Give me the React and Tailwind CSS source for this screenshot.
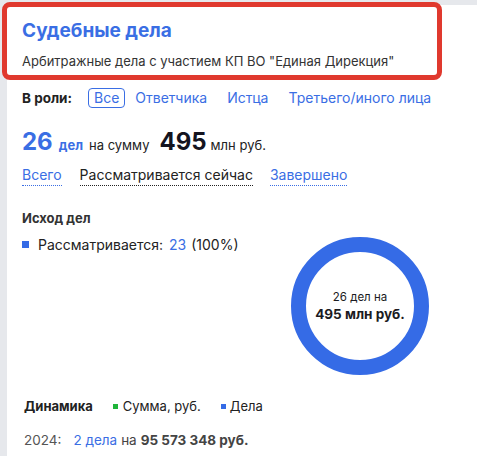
import React from 'react';

const font = { fontFamily: 'Inter, "Noto Sans", sans-serif' };

function Donut() {
  return (
    <div className="relative w-[138px] h-[138px] shrink-0">
      <svg width="138" height="138" viewBox="0 0 138 138">
        <circle cx="69" cy="69" r="61.5" fill="none" stroke="#356be6" strokeWidth="15" />
      </svg>
      <div className="absolute inset-0 flex flex-col items-center justify-center text-[#1b1b22]">
        <div className="text-[11.5px] leading-[16px]">26 дел на</div>
        <div className="text-[13.5px] leading-[18px] font-bold">495 млн руб.</div>
      </div>
    </div>
  );
}

export default function App() {
  return (
    <div className="relative w-[477px] h-[456px] overflow-hidden bg-[#e6e8ec] pl-[7px] pt-[5px]" style={font}>
      <div className="bg-white w-[480px] h-full pl-[15px] text-[#222]">
        {/* шапка */}
        <div className="pt-[13px]">
          <h1 className="text-[19px] leading-[26px] font-bold text-[#3a6ee4]">Судебные дела</h1>
          <p className="mt-[7px] text-[13px] leading-[20px] text-[#333]">
            Арбитражные дела с участием КП ВО "Единая Дирекция"
          </p>
        </div>

        {/* роли */}
        <div className="mt-[17px] flex items-center text-[14px] leading-[20px]">
          <span className="font-bold text-[13.5px] text-[#222]">В роли:</span>
          <span className="ml-[16px] px-[5px] h-[20px] flex items-center border border-[#3a6ee4] rounded-[4px] text-[#3a6ee4]">Все</span>
          <span className="ml-[10px] text-[#3a6ee4]">Ответчика</span>
          <span className="ml-[20px] text-[#3a6ee4]">Истца</span>
          <span className="ml-[20px] text-[#3a6ee4]">Третьего/иного лица</span>
        </div>

        {/* итоги */}
        <div className="mt-[16px] flex items-baseline text-[13px]">
          <span className="text-[24px] leading-[32px] font-bold text-[#3a6ee4]">26</span>
          <span className="ml-[6px] font-bold text-[#3a6ee4]">дел</span>
          <span className="ml-[6px] text-[#222]">на сумму</span>
          <span className="ml-[10px] text-[24px] font-bold text-[#14141f]">495</span>
          <span className="ml-[4px] text-[#222]">млн руб.</span>
        </div>

        <div className="mt-[5px] flex text-[14px] leading-[20px]">
          <span className="text-[#3a6ee4] border-b border-dotted border-[#3a6ee4]">Всего</span>
          <span className="ml-[18px] text-[#222] border-b border-dotted border-[#222]">Рассматривается сейчас</span>
          <span className="ml-[17px] text-[#3a6ee4] border-b border-dotted border-[#3a6ee4]">Завершено</span>
        </div>

        {/* исход */}
        <div className="mt-[22px] text-[13px] leading-[20px] font-bold text-[#333]">Исход дел</div>
        <div className="mt-[6px] flex">
          <div className="w-[269px] flex items-center h-[20px] text-[14px]">
            <span className="w-[7px] h-[7px] bg-[#356be6]" />
            <span className="ml-[9px] text-[#222]">Рассматривается:</span>
            <span className="ml-[6px] text-[#3a6ee4]">23</span>
            <span className="ml-[5px] text-[#222]">(100%)</span>
          </div>
          <div className="mt-[3px]">
            <Donut />
          </div>
        </div>

        {/* динамика */}
        <div className="mt-[21px] ml-[2px] flex items-center text-[13px] leading-[20px]">
          <span className="font-bold text-[#222]">Динамика</span>
          <span className="ml-[20px] w-[5px] h-[5px] bg-[#1fb53a]" />
          <span className="ml-[5px] text-[#222]">Сумма, руб.</span>
          <span className="ml-[20px] w-[5px] h-[5px] bg-[#356be6]" />
          <span className="ml-[4px] text-[#222]">Дела</span>
        </div>
        <div className="mt-[14px] ml-[2px] flex text-[13.5px] leading-[20px]">
          <span className="text-[#555]">2024:</span>
          <span className="ml-[12px] text-[#3a6ee4]">2 дела</span>
          <span className="ml-[4px] text-[#444]">на</span>
          <span className="ml-[4px] font-bold text-[#444]">95 573 348 руб.</span>
        </div>
      </div>

      {/* красная рамка-выделение */}
      <div className="absolute left-[2px] top-[2px] w-[440px] h-[78px] border-[5px] border-[#e0392e] rounded-[8px] pointer-events-none" />
    </div>
  );
}
